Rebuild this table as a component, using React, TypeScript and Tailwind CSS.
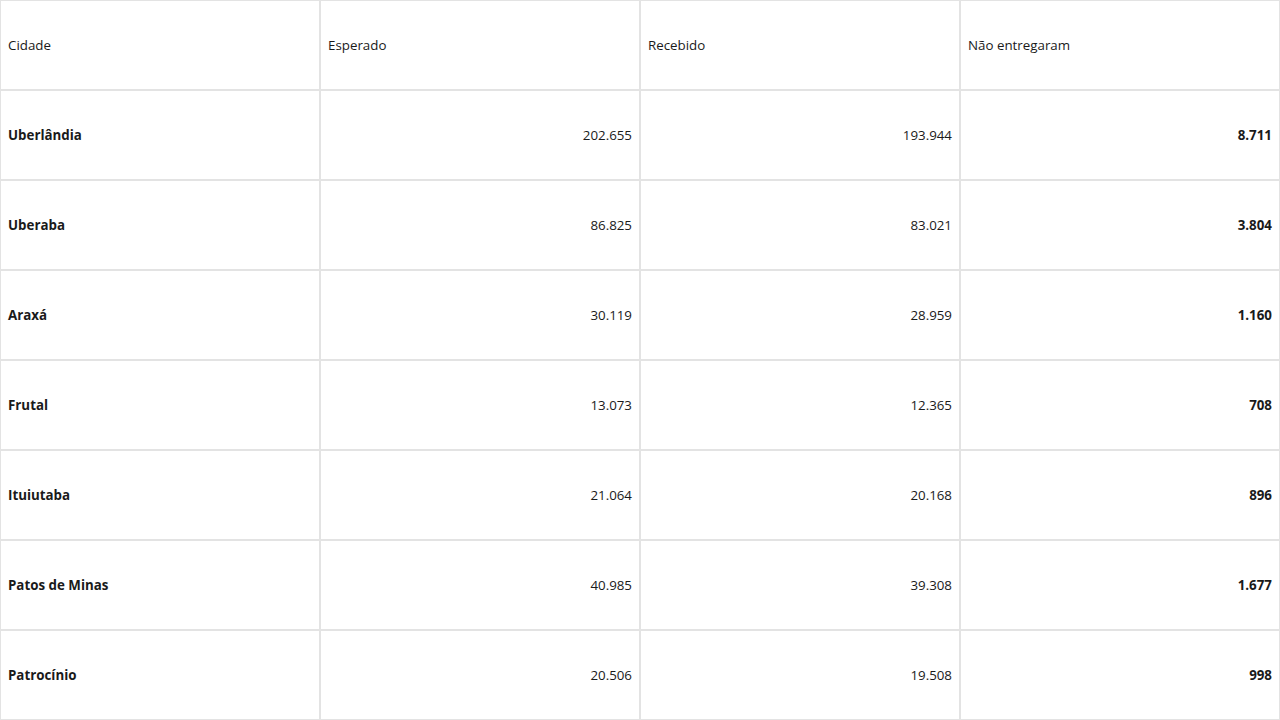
const rows = [
  ["Uberlândia", "202.655", "193.944", "8.711"],
  ["Uberaba", "86.825", "83.021", "3.804"],
  ["Araxá", "30.119", "28.959", "1.160"],
  ["Frutal", "13.073", "12.365", "708"],
  ["Ituiutaba", "21.064", "20.168", "896"],
  ["Patos de Minas", "40.985", "39.308", "1.677"],
  ["Patrocínio", "20.506", "19.508", "998"],
];

const headers = ["Cidade", "Esperado", "Recebido", "Não entregaram"];

export default function App() {
  return (
    <div className="w-[1280px] h-[720px] bg-white font-['Open_Sans',sans-serif] text-[13.33px] text-[#1a1a1a]">
      <div className="grid grid-cols-4">
        {headers.map((h) => (
          <div
            key={h}
            className="h-[90px] border border-[#e3e3e3] flex items-center px-[7px] pt-[2px]"
          >
            {h}
          </div>
        ))}
        {rows.map((r) => (
          <div key={r[0]} className="contents">
            <div className="h-[90px] border border-[#e3e3e3] flex items-center px-[7px] pt-[2px] font-bold">
              {r[0]}
            </div>
            <div className="h-[90px] border border-[#e3e3e3] flex items-center justify-end px-[7px] pt-[2px]">
              {r[1]}
            </div>
            <div className="h-[90px] border border-[#e3e3e3] flex items-center justify-end px-[7px] pt-[2px]">
              {r[2]}
            </div>
            <div className="h-[90px] border border-[#e3e3e3] flex items-center justify-end px-[7px] pt-[2px] font-bold">
              {r[3]}
            </div>
          </div>
        ))}
      </div>
    </div>
  );
}
